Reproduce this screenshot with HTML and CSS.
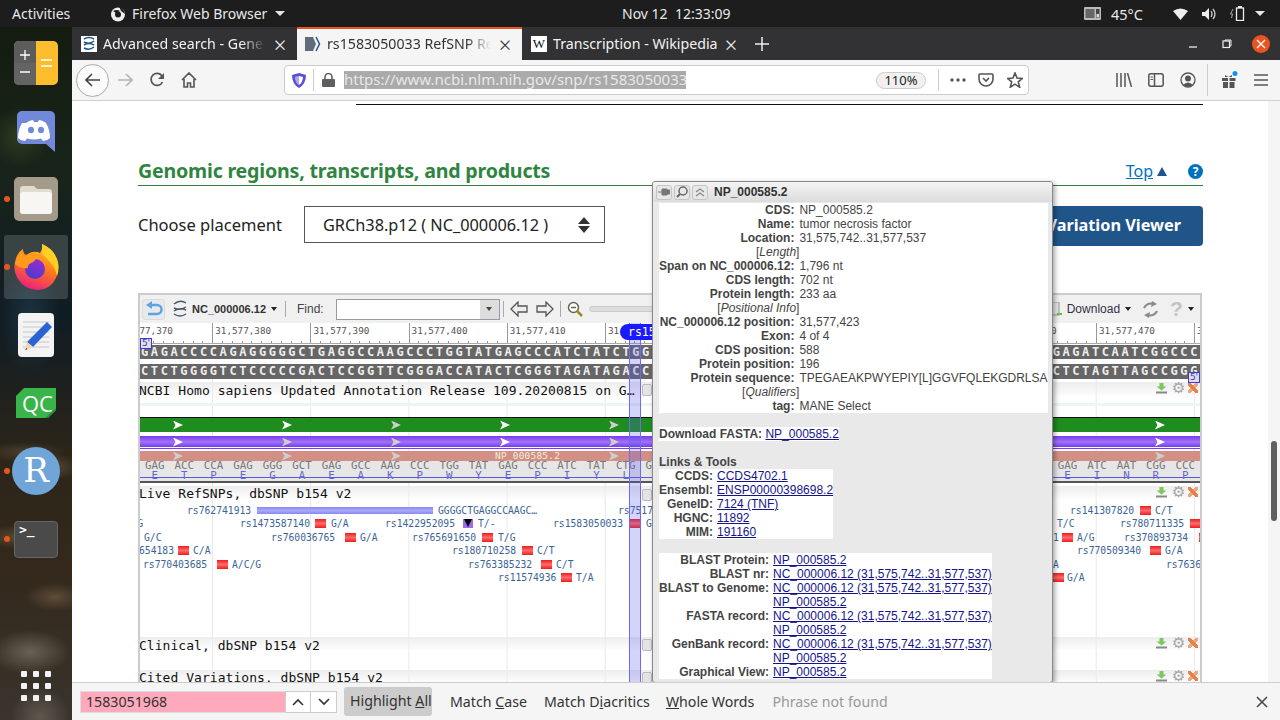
FILE: index.html
```html
<!DOCTYPE html>
<html lang="en">
<head>
    <meta charset="UTF-8">
    <title>rs1583050033 RefSNP Report</title>
    <link rel="stylesheet" href="styles.css">
</head>
<body>
<div class="topbar">
    <div class="topbar-left">
        <span class="activities">Activities</span>
        <span class="appname">
            <svg width="16" height="16" viewBox="0 0 16 16"><circle cx="8" cy="8.5" r="7" fill="#eee"/><circle cx="8" cy="8.5" r="3" fill="#1d1d1d"/><path d="M3 5 Q7 3 10 5 L6 7z M9 0 Q14 3 15 8 L11 5z" fill="#1d1d1d"/></svg>
            Firefox Web Browser
            <i class="caret"></i>
        </span>
    </div>
    <div class="clock">Nov 12&nbsp;&nbsp;12:33:09</div>
    <div class="topbar-right">
        <svg class="cpu" width="17" height="13" viewBox="0 0 17 13"><rect width="17" height="13" rx="1" fill="#bbb"/><rect x="1.5" y="2" width="9" height="9" fill="#666"/><rect x="12" y="2" width="3.5" height="9" fill="#444"/><rect x="12.5" y="7" width="2.5" height="3.5" fill="#ddd"/></svg>
        <span class="temp">45°C</span>
        <svg class="wifi" width="15" height="12" viewBox="0 0 15 12"><path d="M0 3 Q7.5 -2 15 3 L7.5 12z" fill="#eee"/></svg>
        <svg class="vol" width="14" height="12" viewBox="0 0 14 12"><path d="M0 4h3l4-4v12l-4-4h-3z" fill="#eee"/><path d="M9 3q2 3 0 6M11 1q4 5 0 10" fill="none" stroke="#ccc" stroke-width="1.3"/></svg>
        <svg class="batt" width="15" height="15" viewBox="0 0 15 15"><path d="M3 3 L0.5 8h2l-1 4" fill="none" stroke="#aaa"/><rect x="6.5" y="2" width="7" height="12.5" fill="none" stroke="#eee" stroke-width="1.3"/><rect x="8" y="0" width="4" height="2" fill="#eee"/></svg>
        <i class="caret"></i>
    </div>
</div>

<div class="desktop">
    <div class="dock">
        <div class="dock-item">
            <svg width="44" height="44" viewBox="0 0 44 44"><rect width="44" height="44" rx="5" fill="#fdbd2c"/><path d="M5 0h17v44h-17a5 5 0 0 1-5-5v-34a5 5 0 0 1 5-5z" fill="#5c5c5c"/><path d="M0 22h22v22h-17a5 5 0 0 1-5-5z" fill="#636363"/><path d="M6 14h10M11 9v10M6 31h10" stroke="#fff" stroke-width="1.3"/><path d="M27 19h11M27 25h11" stroke="#fff" stroke-width="1.3"/></svg>
        </div>
        <div class="dock-item">
            <svg width="38" height="41" viewBox="0 0 38 41"><path d="M5 0h28a5 5 0 0 1 5 5v36l-9-8h-24a5 5 0 0 1-5-5v-23a5 5 0 0 1 5-5z" fill="#7289da"/><path d="M9 12q4-3 7-3l1 2h4l1-2q3 0 7 3 4 7 4 15-3 3-7 3l-2-2.5q-7 2-14 0l-2 2.5q-4 0-7-3 0-8 4-15z" fill="#fff"/><ellipse cx="14" cy="19" rx="3" ry="3.2" fill="#7289da"/><ellipse cx="24" cy="19" rx="3" ry="3.2" fill="#7289da"/></svg>
        </div>
        <div class="dock-item running">
            <svg width="44" height="44" viewBox="0 0 44 44"><rect width="44" height="44" rx="5" fill="#a39a89"/><path d="M6 12a3 3 0 0 1 3-3h11l3 3h12a3 3 0 0 1 3 3v19a3 3 0 0 1-3 3h-26a3 3 0 0 1-3-3z" fill="#e0dccf"/><path d="M6 18a3 3 0 0 1 3-3h26a3 3 0 0 1 3 3v16a3 3 0 0 1-3 3h-26a3 3 0 0 1-3-3z" fill="#f8f6f2"/></svg>
        </div>
        <div class="dock-item running active">
            <svg width="46" height="47" viewBox="0 0 46 47">
                <defs>
                    <linearGradient id="ffbase" x1="0.8" y1="0" x2="0.4" y2="1"><stop offset="0" stop-color="#ffd52e"/><stop offset=".5" stop-color="#ff7a1a"/><stop offset="1" stop-color="#ee1f7c"/></linearGradient>
                    <linearGradient id="ffball" x1="0.7" y1="0" x2="0.3" y2="1"><stop offset="0" stop-color="#9a2bd0"/><stop offset="1" stop-color="#4a3ccc"/></linearGradient>
                </defs>
                <path d="M3 14q-4 12 2 21 7 11 20 11 13-1 18-12 5-12-1-23-4-7-13-11 1 5-2 9-3-2-8-1-3 1-6 3-3-2-3-6-5 3-7 9z" fill="url(#ffbase)"/>
                <path d="M29 0q9 4 13 11 6 10 2 21-2-9-7-14-5-5-8-9 1-4 0-9z" fill="#ffcf24"/>
                <circle cx="22" cy="25" r="10" fill="url(#ffball)"/>
                <path d="M2 20q1-8 7-14 0 5 3 6 7-4 15-1 5 2 7 7-5-4-11-3-2 3-5 4-4 2-3 5-8 1-13-4z" fill="#ff9a1a"/>
            </svg>
        </div>
        <div class="dock-item">
            <svg width="36" height="44" viewBox="0 0 36 44"><rect width="36" height="44" rx="4" fill="#f3f3f3"/><path d="M5 9h26M5 14h26M5 19h26M5 24h26M5 29h26M5 34h26" stroke="#c8c8c8"/><path d="M29 9l5 5-19 20-6-5z" fill="#2a63d4"/><path d="M9 29l6 5-8 3z" fill="#f6d5ae"/><path d="M8.5 35l-1.5 2 2.5-.7z" fill="#333"/></svg>
        </div>
        <div class="dock-item">
            <svg width="40" height="30" viewBox="0 0 40 30"><path d="M8 0h32v22l-8 8h-32v-22z" fill="#38b449"/><path d="M40 20v2l-8 8h-3z" fill="#2a8c38"/></svg>
            <span class="qc-text">QC</span>
        </div>
        <div class="dock-item running">
            <div class="r-icon">R</div>
        </div>
        <div class="dock-item running">
            <div class="term-icon">&gt;_</div>
        </div>
        <div class="apps-grid">
            <i></i><i></i><i></i><i></i><i></i><i></i><i></i><i></i><i></i>
        </div>
    </div>

    <div class="browser">
        <div class="tabbar">
            <div class="tab">
                <svg width="16" height="16" viewBox="0 0 16 16"><rect width="16" height="16" fill="#fff"/><path d="M3 3q5-3 10 0M13 5q-5 4-10 1M3 9q5-3 10 0M13 11q-5 4-10 1" fill="none" stroke="#20558a" stroke-width="1.5"/></svg>
                <span class="tab-title tab-fade">Advanced search - Gene - NCBI</span>
                <span class="tab-close">×</span>
            </div>
            <div class="tab tab-active">
                <svg width="16" height="16" viewBox="0 0 16 16"><path d="M0 1h8l3 7-3 7h-8z" fill="#606c7a"/><path d="M11 1l3.5 7-3.5 7" fill="none" stroke="#20558a" stroke-width="1.5"/></svg>
                <span class="tab-title tab-fade">rs1583050033 RefSNP Report</span>
                <span class="tab-close">×</span>
            </div>
            <div class="tab tab-last">
                <span class="wiki-icon">W</span>
                <span class="tab-title">Transcription - Wikipedia</span>
                <span class="tab-close">×</span>
            </div>
            <svg class="new-tab" width="14" height="14" viewBox="0 0 14 14"><path d="M7 0v14M0 7h14" stroke="#eee" stroke-width="1.5"/></svg>
            <div class="winctl">
                <svg width="10" height="10" viewBox="0 0 10 10"><path d="M1 8h8" stroke="#eee" stroke-width="1.3"/></svg>
                <svg width="10" height="10" viewBox="0 0 10 10"><rect x="1" y="2" width="6.5" height="6.5" fill="none" stroke="#eee" stroke-width="1.2"/><path d="M3 2v-1h6v6h-1.5" fill="none" stroke="#eee"/></svg>
                <span class="win-close">
                    <svg width="10" height="10" viewBox="0 0 10 10"><path d="M1 1l8 8M9 1l-8 8" stroke="#fff" stroke-width="1.3"/></svg>
                </span>
            </div>
        </div>

        <div class="navbar">
            <span class="back-btn">
                <svg width="16" height="14" viewBox="0 0 16 14"><path d="M15 7h-13M7 1l-6 6 6 6" fill="none" stroke="#444" stroke-width="1.6"/></svg>
            </span>
            <svg class="nav-fwd" width="16" height="14" viewBox="0 0 16 14"><path d="M1 7h13M9 1l6 6-6 6" fill="none" stroke="#b4b4b4" stroke-width="1.6"/></svg>
            <svg class="nav-reload" width="16" height="16" viewBox="0 0 16 16"><path d="M13.5 10a6 6 0 1 1-.5-6" fill="none" stroke="#555" stroke-width="1.7"/><path d="M15 1v6h-6z" fill="#555"/></svg>
            <svg class="nav-home" width="16" height="16" viewBox="0 0 16 16"><path d="M1 8l7-7 7 7M3 7v8h3.5v-4h3v4h3.5v-8" fill="none" stroke="#555" stroke-width="1.6"/></svg>
            <div class="urlbar">
                <svg class="shield" width="14" height="15" viewBox="0 0 14 15"><path d="M7 0l7 2q0 9-7 13-7-4-7-13z" fill="#5a4fd0"/><path d="M7 3l4 1q0 5-4 8-4-3-4-8z" fill="#fff"/><path d="M7 3v9q-4-3-4-8z" fill="#5a4fd0" opacity=".5"/></svg>
                <i class="url-sep"></i>
                <svg class="lock" width="13" height="14" viewBox="0 0 13 14"><rect y="6" width="13" height="8" rx="1" fill="#5f5f5f"/><path d="M3 6v-2a3.5 3.5 0 0 1 7 0v2" fill="none" stroke="#5f5f5f" stroke-width="1.6"/></svg>
                <span class="url-text">https://www.ncbi.nlm.nih.gov/snp/rs1583050033</span>
                <span class="zoom-pill">110%</span>
                <i class="url-sep sep-right"></i>
                <svg class="url-dots" width="16" height="4" viewBox="0 0 16 4"><circle cx="2" cy="2" r="1.7" fill="#555"/><circle cx="8" cy="2" r="1.7" fill="#555"/><circle cx="14" cy="2" r="1.7" fill="#555"/></svg>
                <svg class="pocket" width="16" height="14" viewBox="0 0 16 14"><path d="M2 1h12a1 1 0 0 1 1 1v4a7 7 0 0 1-14 0v-4a1 1 0 0 1 1-1z" fill="none" stroke="#555" stroke-width="1.6"/><path d="M5 5l3 3 3-3" fill="none" stroke="#555" stroke-width="1.6"/></svg>
                <svg class="star" width="16" height="16" viewBox="0 0 16 16"><path d="M8 1l2 5 5.5.4-4.2 3.5 1.4 5.3-4.7-3-4.7 3 1.4-5.3-4.2-3.5 5.5-.4z" fill="none" stroke="#555" stroke-width="1.6"/></svg>
            </div>
            <svg class="tb-lib" width="16" height="14" viewBox="0 0 16 14"><path d="M1 0v14M5 0v14M9 0v14M11.5 0l4 14" stroke="#555" stroke-width="1.5"/></svg>
            <svg class="tb-side" width="16" height="14" viewBox="0 0 16 14"><rect x=".8" y=".8" width="14.4" height="12.4" rx="2" fill="none" stroke="#555" stroke-width="1.5"/><path d="M6.5 1v12" stroke="#555" stroke-width="1.5"/><path d="M2.5 4h2.5M2.5 6.5h2.5" stroke="#555"/></svg>
            <svg class="tb-acct" width="16" height="16" viewBox="0 0 16 16"><circle cx="8" cy="8" r="7" fill="none" stroke="#555" stroke-width="1.3"/><circle cx="8" cy="6.5" r="3" fill="#555"/><path d="M3 13q5-5 10 0q-5 3-10 0z" fill="#555"/></svg>
            <i class="tb-sep"></i>
            <svg class="tb-gift" width="18" height="18" viewBox="0 0 18 18"><path d="M1 7h6v3h-6zM8.5 7h6v3h-6zM2 11h5v6h-5zM8.5 11h5v6h-5zM4 4l3.5 2 3.5-2v2h-7z" fill="#555"/><circle cx="14" cy="2.5" r="2.5" fill="#0a94f5"/></svg>
            <svg class="tb-menu" width="14" height="12" viewBox="0 0 14 12"><path d="M0 1h14M0 6h14M0 11h14" stroke="#555" stroke-width="1.6"/></svg>
        </div>

        <div class="content">
            <div class="page">
                <hr class="top-rule">
                <div class="section-head">
                    <h2>Genomic regions, transcripts, and products</h2>
                    <a class="top-link" href="#">Top</a>
                    <i class="top-arrow"></i>
                    <span class="help-btn">?</span>
                </div>
                <div class="placement">
                    <label>Choose placement</label>
                    <div class="select-box">
                        <span>GRCh38.p12 ( NC_000006.12 )</span>
                        <span class="select-arrows"><i class="up"></i><i class="down"></i></span>
                    </div>
                    <a class="viewer-btn" href="#">Variation Viewer</a>
                </div>

                <div class="viewer">
                    <div class="sv-toolbar">
                        <span class="sv-back">
                            <svg width="18" height="16" viewBox="0 0 18 16"><path d="M4 4h8a4.5 4.5 0 0 1 0 9h-9" fill="none" stroke="#5fa3dc" stroke-width="2.4"/><path d="M7 0l-6 4 6 4z" fill="#5fa3dc"/></svg>
                        </span>
                        <svg class="sv-seq" width="16" height="18" viewBox="0 0 16 18"><path d="M2 4q6-5 12-1M14 7q-6 4-12 1M2 11q6-4 12-1M14 14q-6 4-12 0" fill="none" stroke="#44586c" stroke-width="1.5"/></svg>
                        <b class="sv-acc">NC_000006.12</b>
                        <i class="mini-caret"></i>
                        <i class="sv-sep"></i>
                        <span class="sv-find">Find:</span>
                        <div class="sv-input"><span class="sv-drop"><i class="mini-caret"></i></span></div>
                        <i class="sv-sep sep-b"></i>
                        <svg class="sv-arrow" width="18" height="16" viewBox="0 0 18 16"><path d="M1 8l7-7v4h9v6h-9v4z" fill="#eee" stroke="#555" stroke-width="1.3"/></svg>
                        <svg class="sv-arrow" width="18" height="16" viewBox="0 0 18 16"><path d="M17 8l-7-7v4h-9v6h9v4z" fill="#eee" stroke="#555" stroke-width="1.3"/></svg>
                        <i class="sv-sep sep-c"></i>
                        <svg class="sv-zoom" width="16" height="16" viewBox="0 0 16 16"><circle cx="6.5" cy="6.5" r="5" fill="#fff" stroke="#665" stroke-width="1.5"/><path d="M4 6.5h5" stroke="#665" stroke-width="1.5"/><path d="M10 10l5 5" stroke="#a08820" stroke-width="2.5"/></svg>
                        <i class="sv-slider"></i>
                        <svg class="sv-export" width="12" height="14" viewBox="0 0 12 14"><rect width="9" height="13" fill="#e8e8e8" stroke="#999"/><path d="M7 12h5" stroke="#6cc04a" stroke-width="2"/></svg>
                        <span class="sv-download">Download</span>
                        <i class="mini-caret"></i>
                        <svg class="sv-reload" width="17" height="17" viewBox="0 0 17 17"><path d="M2 7q3-6 11-4M15 10q-3 6-11 4" fill="none" stroke="#8a8a8a" stroke-width="2.2"/><path d="M10 0l5 3-6 3zM7 17l-5-3 6-3z" fill="#8a8a8a"/></svg>
                        <span class="sv-help">?</span>
                        <i class="mini-caret"></i>
                    </div>

                    <div class="ruler">
                        <span>31,577,370</span><span>31,577,380</span><span>31,577,390</span><span>31,577,400</span><span>31,577,410</span><span>31,577,420</span><span></span><span></span><span></span><span>31,577,460</span><span>31,577,470</span><span>31,577,480</span>
                    </div>
                    <div class="seq seq-top"><span>GAGACCCCAGAGGGGGCTGAGGCCAAGCCCTGGTATGAGCCCATCTATCTGGG</span><span>GAGATCAATCGGCCC</span></div>
                    <div class="seq seq-bottom"><span>CTCTGGGGTCTCCCCCGACTCCGGTTCGGGACCATACTCGGGTAGATAGACCC</span><span>CTCTAGTTAGCCGGG</span></div>

                    <div class="tracks">
                        <div class="track-head annot-head">
                            <span class="track-name">NCBI Homo sapiens Updated Annotation Release 109.20200815 on G…</span>
                            <span class="track-tools">
                                <svg width="11" height="11" viewBox="0 0 11 11"><path d="M3.5 0h4v3.5h3l-5 4-5-4h3z" fill="#7cc85a"/><path d="M0 8.500h11v2h-11z" fill="#888"/></svg>
                                <i class="t-gear">⚙</i><i class="t-x"></i>
                            </span>
                        </div>
                        <div class="band band-green">
                            <i class="chev" style="left:33px"></i><i class="chev" style="left:142px"></i><i class="chev dim" style="left:251px"></i><i class="chev" style="left:360px"></i><i class="chev dim" style="left:469px"></i><i class="chev" style="left:1015px"></i>
                        </div>
                        <div class="band band-purple">
                            <i class="chev" style="left:33px"></i><i class="chev dim" style="left:142px"></i><i class="chev dim" style="left:251px"></i><i class="chev" style="left:360px"></i><i class="chev dim" style="left:469px"></i><i class="chev" style="left:1015px"></i>
                        </div>
                        <div class="band band-pink">
                            <i class="chev dim" style="left:33px"></i><i class="chev dim" style="left:142px"></i><i class="chev dim" style="left:251px"></i><span class="band-label">NP_000585.2</span><i class="chev dim" style="left:469px"></i><i class="chev dim" style="left:1015px"></i>
                        </div>
                        <div class="codons">
                            <span>GAG<b>E</b></span><span>ACC<b>T</b></span><span>CCA<b>P</b></span><span>GAG<b>E</b></span><span>GGG<b>G</b></span><span>GCT<b>A</b></span><span>GAG<b>E</b></span><span>GCC<b>A</b></span><span>AAG<b>K</b></span><span>CCC<b>P</b></span><span>TGG<b>W</b></span><span>TAT<b>Y</b></span><span>GAG<b>E</b></span><span>CCC<b>P</b></span><span>ATC<b>I</b></span><span>TAT<b>Y</b></span><span>CTG<b>L</b></span><span>GGA</span>
                            <span></span><span></span><span></span><span></span><span></span><span></span><span></span><span></span><span></span><span></span><span></span><span></span><span></span>
                            <span>GAG<b>E</b></span><span>ATC<b>I</b></span><span>AAT<b>N</b></span><span>CGG<b>R</b></span><span>CCC<b>P</b></span>
                        </div>

                        <div class="track-head live-head">
                            <span class="track-name">Live RefSNPs, dbSNP b154 v2</span>
                            <span class="track-tools">
                                <svg width="11" height="11" viewBox="0 0 11 11"><path d="M3.5 0h4v3.5h3l-5 4-5-4h3z" fill="#7cc85a"/><path d="M0 8.500h11v2h-11z" fill="#888"/></svg>
                                <i class="t-gear">⚙</i><i class="t-x"></i>
                            </span>
                        </div>
                        <div class="snps">
                            <div class="snp-row">
                                <span class="snp" style="left:47px">rs762741913</span><i class="snp-bar" style="left:117px;width:176px"></i><span class="snp" style="left:298px">GGGGCTGAGGCCAAGC…</span>
                                <span class="snp" style="left:478px">rs7517</span>
                                <span class="snp" style="left:930px">rs141307820</span><i class="mark" style="left:1000px"></i><span class="snp" style="left:1015px">C/T</span>
                            </div>
                            <div class="snp-row">
                                <span class="snp clip-left" style="left:-1px">G</span>
                                <span class="snp" style="left:100px">rs1473587140</span><i class="mark" style="left:175px"></i><span class="snp" style="left:191px">G/A</span>
                                <span class="snp" style="left:245px">rs1422952095</span><i class="mark-del" style="left:323px"></i><span class="snp" style="left:338px">T/-</span>
                                <span class="snp" style="left:413px">rs1583050033</span><i class="mark" style="left:490px"></i><span class="snp" style="left:506px">G/A</span>
                                <span class="snp" style="left:917px">T/C</span>
                                <span class="snp" style="left:980px">rs780711335</span><i class="mark" style="left:1050px"></i>
                            </div>
                            <div class="snp-row">
                                <span class="snp" style="left:4px">G/C</span>
                                <span class="snp" style="left:131px">rs760036765</span><i class="mark" style="left:205px"></i><span class="snp" style="left:220px">G/A</span>
                                <span class="snp" style="left:272px">rs765691650</span><i class="mark" style="left:342px"></i><span class="snp" style="left:358px">T/G</span>
                                <span class="snp" style="left:913px">1</span><i class="mark" style="left:922px"></i><span class="snp" style="left:937px">A/G</span>
                                <span class="snp" style="left:984px">rs370893734</span><i class="mark" style="left:1059px"></i>
                            </div>
                            <div class="snp-row">
                                <span class="snp" style="left:-1px">654183</span><i class="mark" style="left:38px"></i><span class="snp" style="left:53px">C/A</span>
                                <span class="snp" style="left:312px">rs180710258</span><i class="mark" style="left:382px"></i><span class="snp" style="left:397px">C/T</span>
                                <span class="snp" style="left:937px">rs770509340</span><i class="mark" style="left:1010px"></i><span class="snp" style="left:1025px">G/A</span>
                            </div>
                            <div class="snp-row">
                                <span class="snp" style="left:3px">rs770403685</span><i class="mark" style="left:77px"></i><span class="snp" style="left:92px">A/C/G</span>
                                <span class="snp" style="left:328px">rs763385232</span><i class="mark" style="left:401px"></i><span class="snp" style="left:416px">C/T</span>
                                <span class="snp" style="left:913px">A</span>
                                <span class="snp" style="left:1026px">rs7636</span>
                            </div>
                            <div class="snp-row">
                                <span class="snp" style="left:358px">rs11574936</span><i class="mark" style="left:421px"></i><span class="snp" style="left:436px">T/A</span>
                                <i class="mark" style="left:913px"></i><span class="snp" style="left:927px">G/A</span>
                            </div>
                        </div>

                        <div class="track-head clinical-head">
                            <span class="track-name">Clinical, dbSNP b154 v2</span>
                            <span class="track-tools">
                                <svg width="11" height="11" viewBox="0 0 11 11"><path d="M3.5 0h4v3.5h3l-5 4-5-4h3z" fill="#7cc85a"/><path d="M0 8.500h11v2h-11z" fill="#888"/></svg>
                                <i class="t-gear">⚙</i><i class="t-x"></i>
                            </span>
                        </div>
                        <div class="track-head cited-head">
                            <span class="track-name">Cited Variations, dbSNP b154 v2</span>
                            <span class="track-tools">
                                <svg width="11" height="11" viewBox="0 0 11 11"><path d="M3.5 0h4v3.5h3l-5 4-5-4h3z" fill="#7cc85a"/><path d="M0 8.500h11v2h-11z" fill="#888"/></svg>
                                <i class="t-gear">⚙</i><i class="t-x"></i>
                            </span>
                        </div>
                    </div>

                    <div class="marker-col"></div>
                    <div class="marker-pill">rs15</div>
                    <span class="end-flag flag-left">5'</span>
                    <span class="end-flag flag-right">5'</span>
                    <i class="track-handle handle-1"></i>
                    <i class="track-handle handle-2"></i>
                    <i class="track-handle handle-3"></i>
                    <i class="track-handle handle-4"></i>
                </div>

                <div class="popup">
                    <div class="popup-title">
                        <span class="pop-btn"><svg width="12" height="10" viewBox="0 0 12 10"><path d="M0 5h4M4 2h5v6h-5zM9 3h3v4h-3z" fill="#777" stroke="#777"/></svg></span>
                        <span class="pop-btn"><svg width="12" height="12" viewBox="0 0 12 12"><circle cx="7" cy="5" r="4" fill="none" stroke="#666" stroke-width="1.5"/><path d="M4 8l-3 3" stroke="#666" stroke-width="2"/></svg></span>
                        <span class="pop-btn"><svg width="10" height="10" viewBox="0 0 10 10"><path d="M1 5l4-3 4 3M1 9l4-3 4 3" fill="none" stroke="#888" stroke-width="1.2"/></svg></span>
                        <b>NP_000585.2</b>
                    </div>
                    <div class="popup-body">
                        <table class="info info-main">
                            <tr><th>CDS:</th><td>NP_000585.2</td></tr>
                            <tr><th>Name:</th><td>tumor necrosis factor</td></tr>
                            <tr><th>Location:</th><td>31,575,742..31,577,537</td></tr>
                            <tr><th class="sub">[<em>Length</em>]</th><td></td></tr>
                            <tr><th>Span on NC_000006.12:</th><td>1,796 nt</td></tr>
                            <tr><th>CDS length:</th><td>702 nt</td></tr>
                            <tr><th>Protein length:</th><td>233 aa</td></tr>
                            <tr><th class="sub">[<em>Positional Info</em>]</th><td></td></tr>
                            <tr><th>NC_000006.12 position:</th><td>31,577,423</td></tr>
                            <tr><th>Exon:</th><td>4 of 4</td></tr>
                            <tr><th>CDS position:</th><td>588</td></tr>
                            <tr><th>Protein position:</th><td>196</td></tr>
                            <tr><th>Protein sequence:</th><td>TPEGAEAKPWYEPIY[L]GGVFQLEKGDRLSA</td></tr>
                            <tr><th class="sub">[<em>Qualifiers</em>]</th><td></td></tr>
                            <tr><th>tag:</th><td>MANE Select</td></tr>
                        </table>
                        <p class="fasta-line"><b>Download FASTA:</b> <a href="#">NP_000585.2</a></p>
                        <p class="links-title"><b>Links &amp; Tools</b></p>
                        <table class="info info-links">
                            <tr><th>CCDS:</th><td><a href="#">CCDS4702.1</a></td></tr>
                            <tr><th>Ensembl:</th><td><a href="#">ENSP00000398698.2</a></td></tr>
                            <tr><th>GeneID:</th><td><a href="#">7124 (TNF)</a></td></tr>
                            <tr><th>HGNC:</th><td><a href="#">11892</a></td></tr>
                            <tr><th>MIM:</th><td><a href="#">191160</a></td></tr>
                        </table>
                        <table class="info info-links info-tools">
                            <tr><th>BLAST Protein:</th><td><a href="#">NP_000585.2</a></td></tr>
                            <tr><th>BLAST nr:</th><td><a href="#">NC_000006.12 (31,575,742..31,577,537)</a></td></tr>
                            <tr><th>BLAST to Genome:</th><td><a href="#">NC_000006.12 (31,575,742..31,577,537)</a></td></tr>
                            <tr><th></th><td><a href="#">NP_000585.2</a></td></tr>
                            <tr><th>FASTA record:</th><td><a href="#">NC_000006.12 (31,575,742..31,577,537)</a></td></tr>
                            <tr><th></th><td><a href="#">NP_000585.2</a></td></tr>
                            <tr><th>GenBank record:</th><td><a href="#">NC_000006.12 (31,575,742..31,577,537)</a></td></tr>
                            <tr><th></th><td><a href="#">NP_000585.2</a></td></tr>
                            <tr><th>Graphical View:</th><td><a href="#">NP_000585.2</a></td></tr>
                        </table>
                    </div>
                </div>
            </div>
            <div class="scrollbar"><i class="thumb"></i></div>
        </div>

        <div class="findbar">
            <div class="find-input">1583051968</div>
            <span class="find-step"><svg width="12" height="8" viewBox="0 0 12 8"><path d="M1 7l5-5 5 5" fill="none" stroke="#333" stroke-width="1.6"/></svg></span>
            <span class="find-step"><svg width="12" height="8" viewBox="0 0 12 8"><path d="M1 1l5 5 5-5" fill="none" stroke="#333" stroke-width="1.6"/></svg></span>
            <span class="find-opt find-on">Highlight <u>A</u>ll</span>
            <span class="find-opt">Match <u>C</u>ase</span>
            <span class="find-opt">Match D<u>i</u>acritics</span>
            <span class="find-opt find-wide"><u>W</u>hole Words</span>
            <span class="find-status">Phrase not found</span>
            <svg class="find-close" width="12" height="12" viewBox="0 0 12 12"><path d="M1 1l10 10M11 1l-10 10" stroke="#444" stroke-width="1.5"/></svg>
        </div>
    </div>
</div>
</body>
</html>
```

FILE: styles.css
```css
* {
    margin: 0;
    padding: 0;
    box-sizing: border-box;
}

html, body {
    width: 1280px;
    height: 720px;
    overflow: hidden;
}

body {
    font-family: "Noto Sans", sans-serif;
    background: #1d1d1d;
    display: flex;
    flex-direction: column;
}

i {
    display: block;
    font-style: normal;
}

svg {
    flex: none;
    display: block;
}

/* gnome top bar */
.topbar {
    height: 27px;
    flex: none;
    background: #1d1d1d;
    color: #e8e8e8;
    font-size: 14px;
    position: relative;
    display: flex;
    align-items: center;
    justify-content: space-between;
}

.topbar-left {
    display: flex;
    align-items: center;
    padding-left: 12px;
}

.activities {
    width: 98px;
}

.appname {
    display: flex;
    align-items: center;
    gap: 6px;
}

.caret {
    width: 0;
    height: 0;
    border-left: 5px solid transparent;
    border-right: 5px solid transparent;
    border-top: 5px solid #e8e8e8;
    margin-left: 2px;
}

.clock {
    position: absolute;
    left: 622px;
    top: 4px;
}

.topbar-right {
    display: flex;
    align-items: center;
    padding-right: 15px;
}

.temp {
    margin-left: 10px;
    font-size: 14.5px;
}

.wifi {
    margin-left: 30px;
}

.vol {
    margin-left: 14px;
}

.batt {
    margin-left: 14px;
}

.topbar-right .caret {
    margin-left: 10px;
}

/* launcher */
.desktop {
    flex: 1;
    display: flex;
    min-height: 0;
}

.dock {
    width: 72px;
    flex: none;
    padding-top: 2px;
    display: flex;
    flex-direction: column;
    align-items: center;
    background:
        radial-gradient(ellipse 30px 14px at 50px 440px, #5a4a36, transparent),
        radial-gradient(ellipse 40px 10px at 25px 425px, #4b3f2c, transparent),
        radial-gradient(ellipse 40px 12px at 20px 510px, #5c4a32, transparent),
        radial-gradient(ellipse 30px 14px at 55px 570px, #5d4c38, transparent),
        radial-gradient(ellipse 40px 22px at 30px 625px, #6a6155, transparent),
        radial-gradient(ellipse 30px 30px at 40px 690px, #5f584e, transparent),
        radial-gradient(ellipse 30px 60px at 30px 290px, #1a3340, transparent),
        radial-gradient(ellipse 30px 30px at 20px 110px, #2e3c20, transparent),
        linear-gradient(180deg, #141c10 0%, #18241a 20%, #101c24 42%, #2c2519 62%, #33281b 78%, #3a342d 100%);
}

.dock-item {
    width: 64px;
    height: 68px;
    flex: none;
    position: relative;
    display: flex;
    align-items: center;
    justify-content: center;
}

.dock-item.active {
    background: rgba(255, 255, 255, .16);
    border-radius: 3px;
    height: 64px;
    margin: 2px 0;
}

.dock-item.running::before {
    content: "";
    position: absolute;
    left: 0;
    top: 50%;
    width: 6px;
    height: 6px;
    margin-top: -3px;
    border-radius: 50%;
    background: #e95420;
}

.qc-text {
    position: absolute;
    left: 18px;
    top: 19px;
    font-size: 22px;
    line-height: 30px;
    color: #fff;
    font-family: "Open Sans", sans-serif;
}

.r-icon {
    width: 48px;
    height: 48px;
    border-radius: 50%;
    background: #6fa5d8;
    color: #fff;
    font: 34px/46px "DejaVu Serif", serif;
    text-align: center;
}

.term-icon {
    width: 44px;
    height: 37px;
    background: #4a4a4a;
    border: 1px solid #666;
    border-radius: 4px;
    color: #fff;
    font: 700 13px/14px "DejaVu Sans Mono", monospace;
    padding: 1px 0 0 4px;
}

.apps-grid {
    margin-top: auto;
    margin-bottom: 19px;
    display: grid;
    grid-template-columns: repeat(3, 6px);
    gap: 6px;
}

.apps-grid i {
    height: 6px;
    border-radius: 1px;
    background: #f2f2f2;
}

/* firefox chrome */
.browser {
    flex: 1;
    min-width: 0;
    display: flex;
    flex-direction: column;
    background: #fff;
}

.tabbar {
    height: 33px;
    flex: none;
    background: #323234;
    display: flex;
    align-items: center;
}

.tab {
    width: 225px;
    height: 33px;
    flex: none;
    display: flex;
    align-items: center;
    padding: 0 9px;
    gap: 6px;
    color: #f2f2f2;
    font-size: 14.2px;
    overflow: hidden;
}

.tab-active {
    background: #f5f5f5;
    color: #333;
    box-shadow: inset 0 2px 0 #e95420;
    padding-left: 8px;
}

.tab-last {
    padding-right: 8px;
}

.tab-title {
    flex: 1;
    white-space: nowrap;
    overflow: hidden;
    padding-bottom: 1px;
}

.tab-fade {
    -webkit-mask-image: linear-gradient(90deg, #000 85%, transparent);
    mask-image: linear-gradient(90deg, #000 85%, transparent);
}

.tab-close {
    width: 16px;
    text-align: center;
    font-size: 22px;
    line-height: 22px;
    font-weight: 300;
}

.wiki-icon {
    width: 16px;
    height: 16px;
    background: #fff;
    color: #111;
    font: 13px/16px "Liberation Serif", serif;
    text-align: center;
}

.new-tab {
    margin-left: 8px;
}

.winctl {
    margin-left: auto;
    display: flex;
    align-items: center;
    gap: 24px;
    padding-right: 10px;
}

.win-close {
    width: 18px;
    height: 18px;
    margin-left: -4px;
    border-radius: 50%;
    background: #e95420;
    display: flex;
    align-items: center;
    justify-content: center;
}

.navbar {
    height: 41px;
    flex: none;
    background: #f5f5f5;
    border-bottom: 1px solid #cfcfcf;
    display: flex;
    align-items: center;
    padding-left: 4px;
}

.back-btn {
    width: 33px;
    height: 33px;
    flex: none;
    border: 1px solid #aaa;
    border-radius: 50%;
    background: #fbfbfb;
    display: flex;
    align-items: center;
    justify-content: center;
}

.nav-fwd {
    margin-left: 8px;
}

.nav-reload {
    margin-left: 16px;
}

.nav-home {
    margin-left: 16px;
}

.urlbar {
    width: 745px;
    height: 30px;
    margin-left: 87px;
    flex: none;
    background: #fff;
    border: 1px solid #ccc;
    border-radius: 4px;
    display: flex;
    align-items: center;
    padding-left: 7px;
}

.shield {
    margin-right: 7px;
}

.url-sep {
    width: 1px;
    height: 22px;
    background: #ccc;
}

.lock {
    margin-left: 8px;
}

.url-text {
    margin-left: 9px;
    background: #aaa;
    color: #e8e8e8;
    font-size: 15px;
    height: 18px;
    line-height: 17px;
    white-space: nowrap;
    width: 342px;
    overflow: hidden;
}

.zoom-pill {
    margin-left: 190px;
    width: 50px;
    height: 17px;
    border: 1px solid #ccc;
    border-radius: 9px;
    background: #f0f0f0;
    font-size: 13px;
    line-height: 15px;
    text-align: center;
    color: #222;
}

.sep-right {
    margin-left: 12px;
}

.url-dots {
    margin-left: 11px;
}

.pocket {
    margin-left: 12px;
}

.star {
    margin-left: 13px;
}

.tb-lib {
    margin-left: 87px;
}

.tb-side {
    margin-left: 16px;
}

.tb-acct {
    margin-left: 16px;
}

.tb-sep {
    width: 1px;
    height: 32px;
    background: #ccc;
    margin-left: 11px;
}

.tb-gift {
    margin-left: 13px;
}

.tb-menu {
    margin-left: 15px;
}

.content {
    flex: 1;
    display: flex;
    min-height: 0;
    overflow: hidden;
}

.page {
    flex: 1;
    position: relative;
    padding: 3px 65px 0 66px;
    overflow: hidden;
    color: #222;
}

.top-rule {
    border: none;
    height: 1px;
    background: #111;
    margin-left: 218px;
}

.section-head {
    margin-top: 52px;
    height: 29px;
    display: flex;
    align-items: center;
    border-bottom: 1px solid #3a7d44;
}

.section-head h2 {
    font-size: 19.6px;
    font-weight: 700;
    color: #2e8540;
    margin-right: auto;
    letter-spacing: -.2px;
    padding-bottom: 2px;
}

.top-link {
    color: #0071bc;
    font-size: 16px;
}

.top-arrow {
    margin-left: 4px;
    width: 0;
    height: 0;
    border-left: 5px solid transparent;
    border-right: 5px solid transparent;
    border-bottom: 9px solid #20558a;
}

.help-btn {
    margin-left: 21px;
    width: 15px;
    height: 15px;
    border-radius: 50%;
    background: #0071bc;
    color: #fff;
    font-size: 12px;
    font-weight: 700;
    line-height: 15px;
    text-align: center;
}

.placement {
    margin-top: 20px;
    display: flex;
    align-items: flex-start;
}

.placement label {
    font-size: 16.5px;
    line-height: 37px;
    width: 166px;
    color: #222;
}

.select-box {
    width: 301px;
    height: 37px;
    border: 1px solid #555;
    display: flex;
    align-items: center;
    justify-content: space-between;
    padding: 0 14px 0 18px;
    font-size: 16.3px;
}

.select-arrows .up {
    width: 0;
    border-left: 6px solid transparent;
    border-right: 6px solid transparent;
    border-bottom: 7px solid #333;
    margin-bottom: 2px;
}

.select-arrows .down {
    width: 0;
    border-left: 6px solid transparent;
    border-right: 6px solid transparent;
    border-top: 7px solid #333;
}

.viewer-btn {
    margin-left: auto;
    width: 240px;
    height: 40px;
    border-radius: 4px;
    background: #20558a;
    color: #fff;
    font-size: 16.3px;
    font-weight: 700;
    line-height: 38px;
    text-align: right;
    padding-right: 22px;
    text-decoration: none;
    white-space: nowrap;
}

/* sequence viewer */
.viewer {
    margin-top: 47px;
    width: 1064px;
    height: 400px;
    border: 2px solid #ccc;
    position: relative;
    background: #fff;
    overflow: hidden;
}

.sv-toolbar {
    height: 28px;
    background: #f0f0f0;
    display: flex;
    align-items: center;
    padding-left: 2px;
    font: 12px "Liberation Sans", sans-serif;
    color: #333;
}

.sv-back {
    width: 23px;
    height: 21px;
    background: #e6eaee;
    border: 1px solid #dcdcdc;
    border-radius: 3px;
    display: flex;
    align-items: center;
    justify-content: center;
}

.sv-seq {
    margin-left: 7px;
}

.sv-acc {
    margin-left: 4px;
    font-size: 11px;
}

.mini-caret {
    width: 0;
    height: 0;
    border-left: 3.5px solid transparent;
    border-right: 3.5px solid transparent;
    border-top: 4px solid #222;
    margin-left: 5px;
    flex: none;
}

.sv-sep {
    width: 1px;
    height: 16px;
    background: #aaa;
    margin: 0 0 0 8px;
    flex: none;
}

.sv-find {
    margin-left: 11px;
    color: #444;
}

.sv-input {
    width: 164px;
    height: 21px;
    margin-left: 12px;
    background: #fff;
    border: 1px solid #99a;
    display: flex;
    justify-content: flex-end;
}

.sv-drop {
    width: 19px;
    background: #ddd;
    display: flex;
    align-items: center;
    justify-content: center;
}

.sv-drop .mini-caret {
    margin: 0;
    border-top-color: #444;
}

.sv-sep.sep-b {
    margin: 0 6px 0 3px;
}

.sv-arrow {
    margin-right: 8px;
}

.sv-sep.sep-c {
    margin: 0 6px 0 -2px;
}

.sv-slider {
    width: 300px;
    height: 6px;
    margin-left: 6px;
    margin-right: 161px;
    border-radius: 3px;
    background: #ddd;
    border: 1px solid #ccc;
}

.sv-export {
    margin-right: 5px;
}

.sv-download {
    color: #334;
}

.sv-reload {
    margin-left: 11px;
}

.sv-help {
    margin-left: 11px;
    font-size: 21px;
    line-height: 18px;
    color: #c4c4c4;
    font-weight: 700;
}

.ruler {
    height: 21px;
    display: flex;
    margin-left: -26px;
    margin-right: -90px;
    background-image: repeating-linear-gradient(90deg, #999 0, #999 1px, transparent 1px, transparent 9.82px);
    background-size: 100% 3px;
    background-position: 0 18px;
    background-repeat: no-repeat;
    border-bottom: 1px solid #aaa;
    font: 9.3px/16px "DejaVu Sans Mono", monospace;
    color: #555;
}

.ruler span {
    width: 98.2px;
    flex: none;
    padding-left: 2px;
    border-left: 1px solid #999;
}

.seq {
    height: 14px;
    background: #666;
    color: #eee;
    font: 700 12px/14px "DejaVu Sans Mono", monospace;
    letter-spacing: 2.6px;
    white-space: nowrap;
    overflow: hidden;
    padding-left: 1px;
    margin-top: 1px;
    display: flex;
    justify-content: space-between;
}

.seq-bottom {
    height: 15px;
    line-height: 15px;
    margin-top: 5px;
}

.tracks {
    background-image: linear-gradient(90deg, #e8e8e8 1px, transparent 1px);
    background-size: 98.2px 100%;
    background-position: 72px 0;
}

.track-head {
    position: relative;
    background: linear-gradient(180deg, rgba(235, 235, 235, .9), rgba(255, 255, 255, .2));
    background-size: 100% 14px;
    background-repeat: no-repeat;
}

.annot-head {
    height: 38px;
    background-image:
        linear-gradient(180deg, rgba(235, 235, 235, .9), rgba(255, 255, 255, .2)),
        linear-gradient(#eff5ef, #eff5ef);
    background-size: 100% 16px, 100% 3px;
    background-position: 0 3px, 0 24px;
}

.annot-head .track-name {
    line-height: 24px;
}

.annot-head .track-tools {
    top: 3px;
}

.live-head {
    height: 18px;
    margin-top: 3px;
}

.live-head .track-name {
    line-height: 16px;
}

.clinical-head {
    height: 33px;
}

.clinical-head .track-name {
    line-height: 18px;
}

.cited-head {
    height: 33px;
}

.cited-head .track-name {
    line-height: 16px;
}

.track-name {
    font: 13px "DejaVu Sans Mono", monospace;
    color: #111;
    white-space: nowrap;
    display: block;
    margin-left: -1px;
    letter-spacing: .04px;
}

.track-tools {
    position: absolute;
    right: 2px;
    top: 0;
    display: flex;
    align-items: center;
    gap: 5px;
    height: 12px;
}

.t-gear {
    width: 11px;
    font: 15px/12px "DejaVu Sans", sans-serif;
    color: #a4a4a4;
    text-align: center;
}

.t-x {
    width: 10px;
    height: 10px;
    background:
        linear-gradient(45deg, transparent 36%, #e8804a 36%, #e8804a 64%, transparent 64%),
        linear-gradient(-45deg, transparent 36%, #e8a880 36%, #e8a880 64%, transparent 64%);
}

.band {
    position: relative;
}

.band-green {
    height: 14px;
    background: #1e8c1e;
    border-top: 1px solid #111;
    box-sizing: content-box;
    margin-bottom: 4px;
}

.band-purple {
    height: 12px;
    background: linear-gradient(180deg, #7a3cf0, #a074f4 50%, #7a3cf0 90%, #fff 90%);
    border-bottom: 1px solid #7a3cf0;
    box-sizing: content-box;
    margin-bottom: 2px;
}

.band-pink {
    height: 10px;
    background: #d48f84;
}

.band-label {
    position: absolute;
    left: 355px;
    top: 0;
    font: 9.5px/10px "DejaVu Sans Mono", monospace;
    color: #eed;
    letter-spacing: .2px;
}

.chev {
    position: absolute;
    top: 50%;
    margin-top: -4.5px;
    width: 10px;
    height: 9px;
    background: #fff;
    clip-path: polygon(0 0, 100% 50%, 0 100%, 25% 50%);
}

.chev.dim {
    background: #cfcfcf;
}

.codons {
    height: 22px;
    display: grid;
    grid-template-columns: repeat(36, 1fr);
    background: #e6e6e6;
    border-bottom: 2px solid #555;
    box-shadow: inset 0 -3px 0 #e6e6e6, inset 0 -4px 0 #5a5ae0;
    font: 10.8px/9.5px "DejaVu Sans Mono", monospace;
    color: #777;
    text-align: center;
}

.codons b {
    display: block;
    font-weight: 400;
    color: #6868c8;
}

.snps {
    height: 133px;
}

.snp-row {
    height: 13.4px;
    position: relative;
}

.snp {
    position: absolute;
    top: 0;
    font: 9.7px/13px "DejaVu Sans Mono", monospace;
    color: #3b6496;
    white-space: nowrap;
}

.clip-left {
    width: 4px;
    overflow: hidden;
    direction: rtl;
}

.snp-bar {
    position: absolute;
    top: 3px;
    height: 7px;
    background: linear-gradient(180deg, #8888f0, #a8a8f8 50%, #8888f0);
}

.mark {
    position: absolute;
    top: 2px;
    width: 11px;
    height: 9px;
    background: linear-gradient(180deg, #f01c1c, #ff6a6a 50%, #f01c1c);
}

.mark-del {
    position: absolute;
    top: 2px;
    width: 10px;
    height: 9px;
    background: #9a6af0;
}

.mark-del::after {
    content: "";
    display: block;
    width: 0;
    border-left: 4px solid transparent;
    border-right: 4px solid transparent;
    border-top: 8px solid #000;
    margin-left: 1px;
}

.marker-col {
    position: absolute;
    left: 489px;
    top: 28px;
    bottom: 0;
    width: 12px;
    background: rgba(90, 90, 235, .26);
    border-left: 1px solid #6c6cf0;
    border-right: 1px solid #6c6cf0;
}

.marker-pill {
    position: absolute;
    left: 480px;
    top: 29px;
    width: 40px;
    height: 16px;
    background: #1a1aff;
    border-radius: 8px 0 0 8px;
    color: #fff;
    font: 11.5px/16px "DejaVu Sans Mono", monospace;
    padding-left: 8px;
}

.end-flag {
    position: absolute;
    width: 12px;
    height: 11px;
    background: #dde;
    border: 1px solid #3a3ae0;
    color: #448;
    font: 9px/9px "DejaVu Sans", sans-serif;
    text-align: center;
}

.flag-left {
    left: 0;
    top: 43px;
}

.flag-right {
    right: 0;
    top: 77px;
}

.track-handle {
    position: absolute;
    left: 502px;
    width: 10px;
    height: 12px;
    background: #e4e4e4;
    border: 1px solid #bbb;
    border-radius: 2px;
}

.handle-1 {
    top: 89px;
}

.handle-2 {
    top: 194px;
}

.handle-3 {
    top: 344px;
}

.handle-4 {
    top: 377px;
}

/* feature popup */
.popup {
    position: absolute;
    left: 580px;
    top: 80px;
    width: 401px;
    height: 502px;
    background: #e9e9e9;
    border: 1px solid #888;
    border-radius: 3px;
    box-shadow: 2px 2px 5px rgba(0, 0, 0, .35);
    font: 12px/14px "Liberation Sans", sans-serif;
    color: #444;
    overflow: hidden;
}

.popup-title {
    height: 20px;
    background: linear-gradient(180deg, #f4f4f4, #dcdcdc);
    display: flex;
    align-items: center;
    padding-left: 3px;
    gap: 2px;
}

.popup-title b {
    margin-left: 4px;
    color: #333;
}

.pop-btn {
    width: 16px;
    height: 15px;
    background: #e8e8e8;
    border: 1px solid #c4c4c4;
    border-radius: 3px;
    display: flex;
    align-items: center;
    justify-content: center;
}

.popup-body {
    padding: 1px 4px 0 6px;
}

.info {
    border-collapse: collapse;
    background: #fff;
}

.info th {
    text-align: right;
    font-weight: 700;
    padding: 0;
    white-space: nowrap;
}

.info td {
    padding: 0;
    white-space: nowrap;
}

.info-main {
    width: 389px;
}

.info-main th {
    padding-right: 5px;
    width: 140px;
}

.info-main th.sub {
    font-weight: 400;
    padding-right: 0;
}

.info-links th {
    padding-right: 4px;
}

.info a,
.fasta-line a {
    color: #14148c;
}

.fasta-line {
    margin-top: 14px;
    background: #fff;
    display: inline-block;
    vertical-align: top;
}

.links-title {
    margin-top: 14px;
}

.info-tools {
    margin-top: 14px;
}

.scrollbar {
    width: 12px;
    flex: none;
    background: #f5f5f5;
    position: relative;
}

.thumb {
    position: absolute;
    left: 3px;
    top: 340px;
    width: 6px;
    height: 80px;
    border-radius: 3px;
    background: #5f5f5f;
}

/* find bar */
.findbar {
    height: 38px;
    flex: none;
    background: #f5f5f5;
    border-top: 1px solid #ccc;
    display: flex;
    align-items: center;
    padding-left: 8px;
    font-size: 14.2px;
    color: #333;
    z-index: 2;
}

.find-input {
    width: 205px;
    height: 22px;
    background: #ffa9bc;
    border: 1px solid #ddd;
    border-right: none;
    padding-left: 5px;
    line-height: 19px;
}

.find-step {
    width: 26px;
    height: 22px;
    background: #fff;
    border: 1px solid #ccc;
    display: flex;
    align-items: center;
    justify-content: center;
}

.find-step + .find-step {
    border-left: none;
}

.find-opt {
    margin-left: 17px;
    white-space: nowrap;
    padding-bottom: 1px;
}

.find-on {
    margin-left: 7px;
    margin-right: 1px;
    width: 88px;
    height: 29px;
    background: #ccc;
    border-radius: 3px;
    line-height: 28px;
    padding: 0 0 0 6px;
}

.find-wide {
    margin-left: 16px;
}

.find-status {
    margin-left: 18px;
    padding-bottom: 1px;
    color: #999;
}

.find-close {
    margin-left: auto;
    margin-right: 12px;
}
```
